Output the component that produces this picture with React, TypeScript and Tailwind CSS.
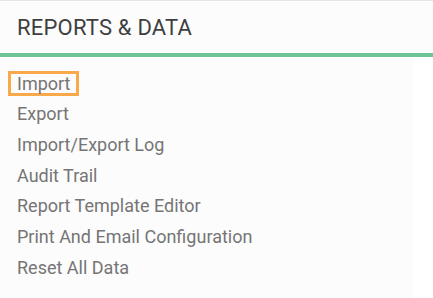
export default function App() {
  const items = [
    'Export',
    'Import/Export Log',
    'Audit Trail',
    'Report Template Editor',
    'Print And Email Configuration',
    'Reset All Data',
  ];

  return (
    <div className="w-[433px] h-[298px] bg-white border-t border-[#e3e6e8] font-['Roboto',sans-serif] overflow-hidden">
      {/* Header */}
      <div className="h-[56px] bg-[#fcfcfc] border-b-4 border-[#6dc495] px-[17px] pt-[2px] flex items-center">
        <h2 className="text-[22px] tracking-[0.2px] text-[#3f3f42] leading-none">REPORTS &amp; DATA</h2>
      </div>

      {/* Menu */}
      <div className="w-[413px] h-[241px] bg-[#fcfcfc] pt-[11px] px-[17px]">
        <ul className="flex flex-col text-[18px] text-[#757575]">
          <li className="h-[30.67px] flex items-center">
            <span className="-ml-[9px] border-[3px] border-[#f9a84a] px-[6px] leading-[19px]">Import</span>
          </li>
          {items.map((item) => (
            <li key={item} className="h-[30.67px] flex items-center">
              {item}
            </li>
          ))}
        </ul>
      </div>
    </div>
  );
}
